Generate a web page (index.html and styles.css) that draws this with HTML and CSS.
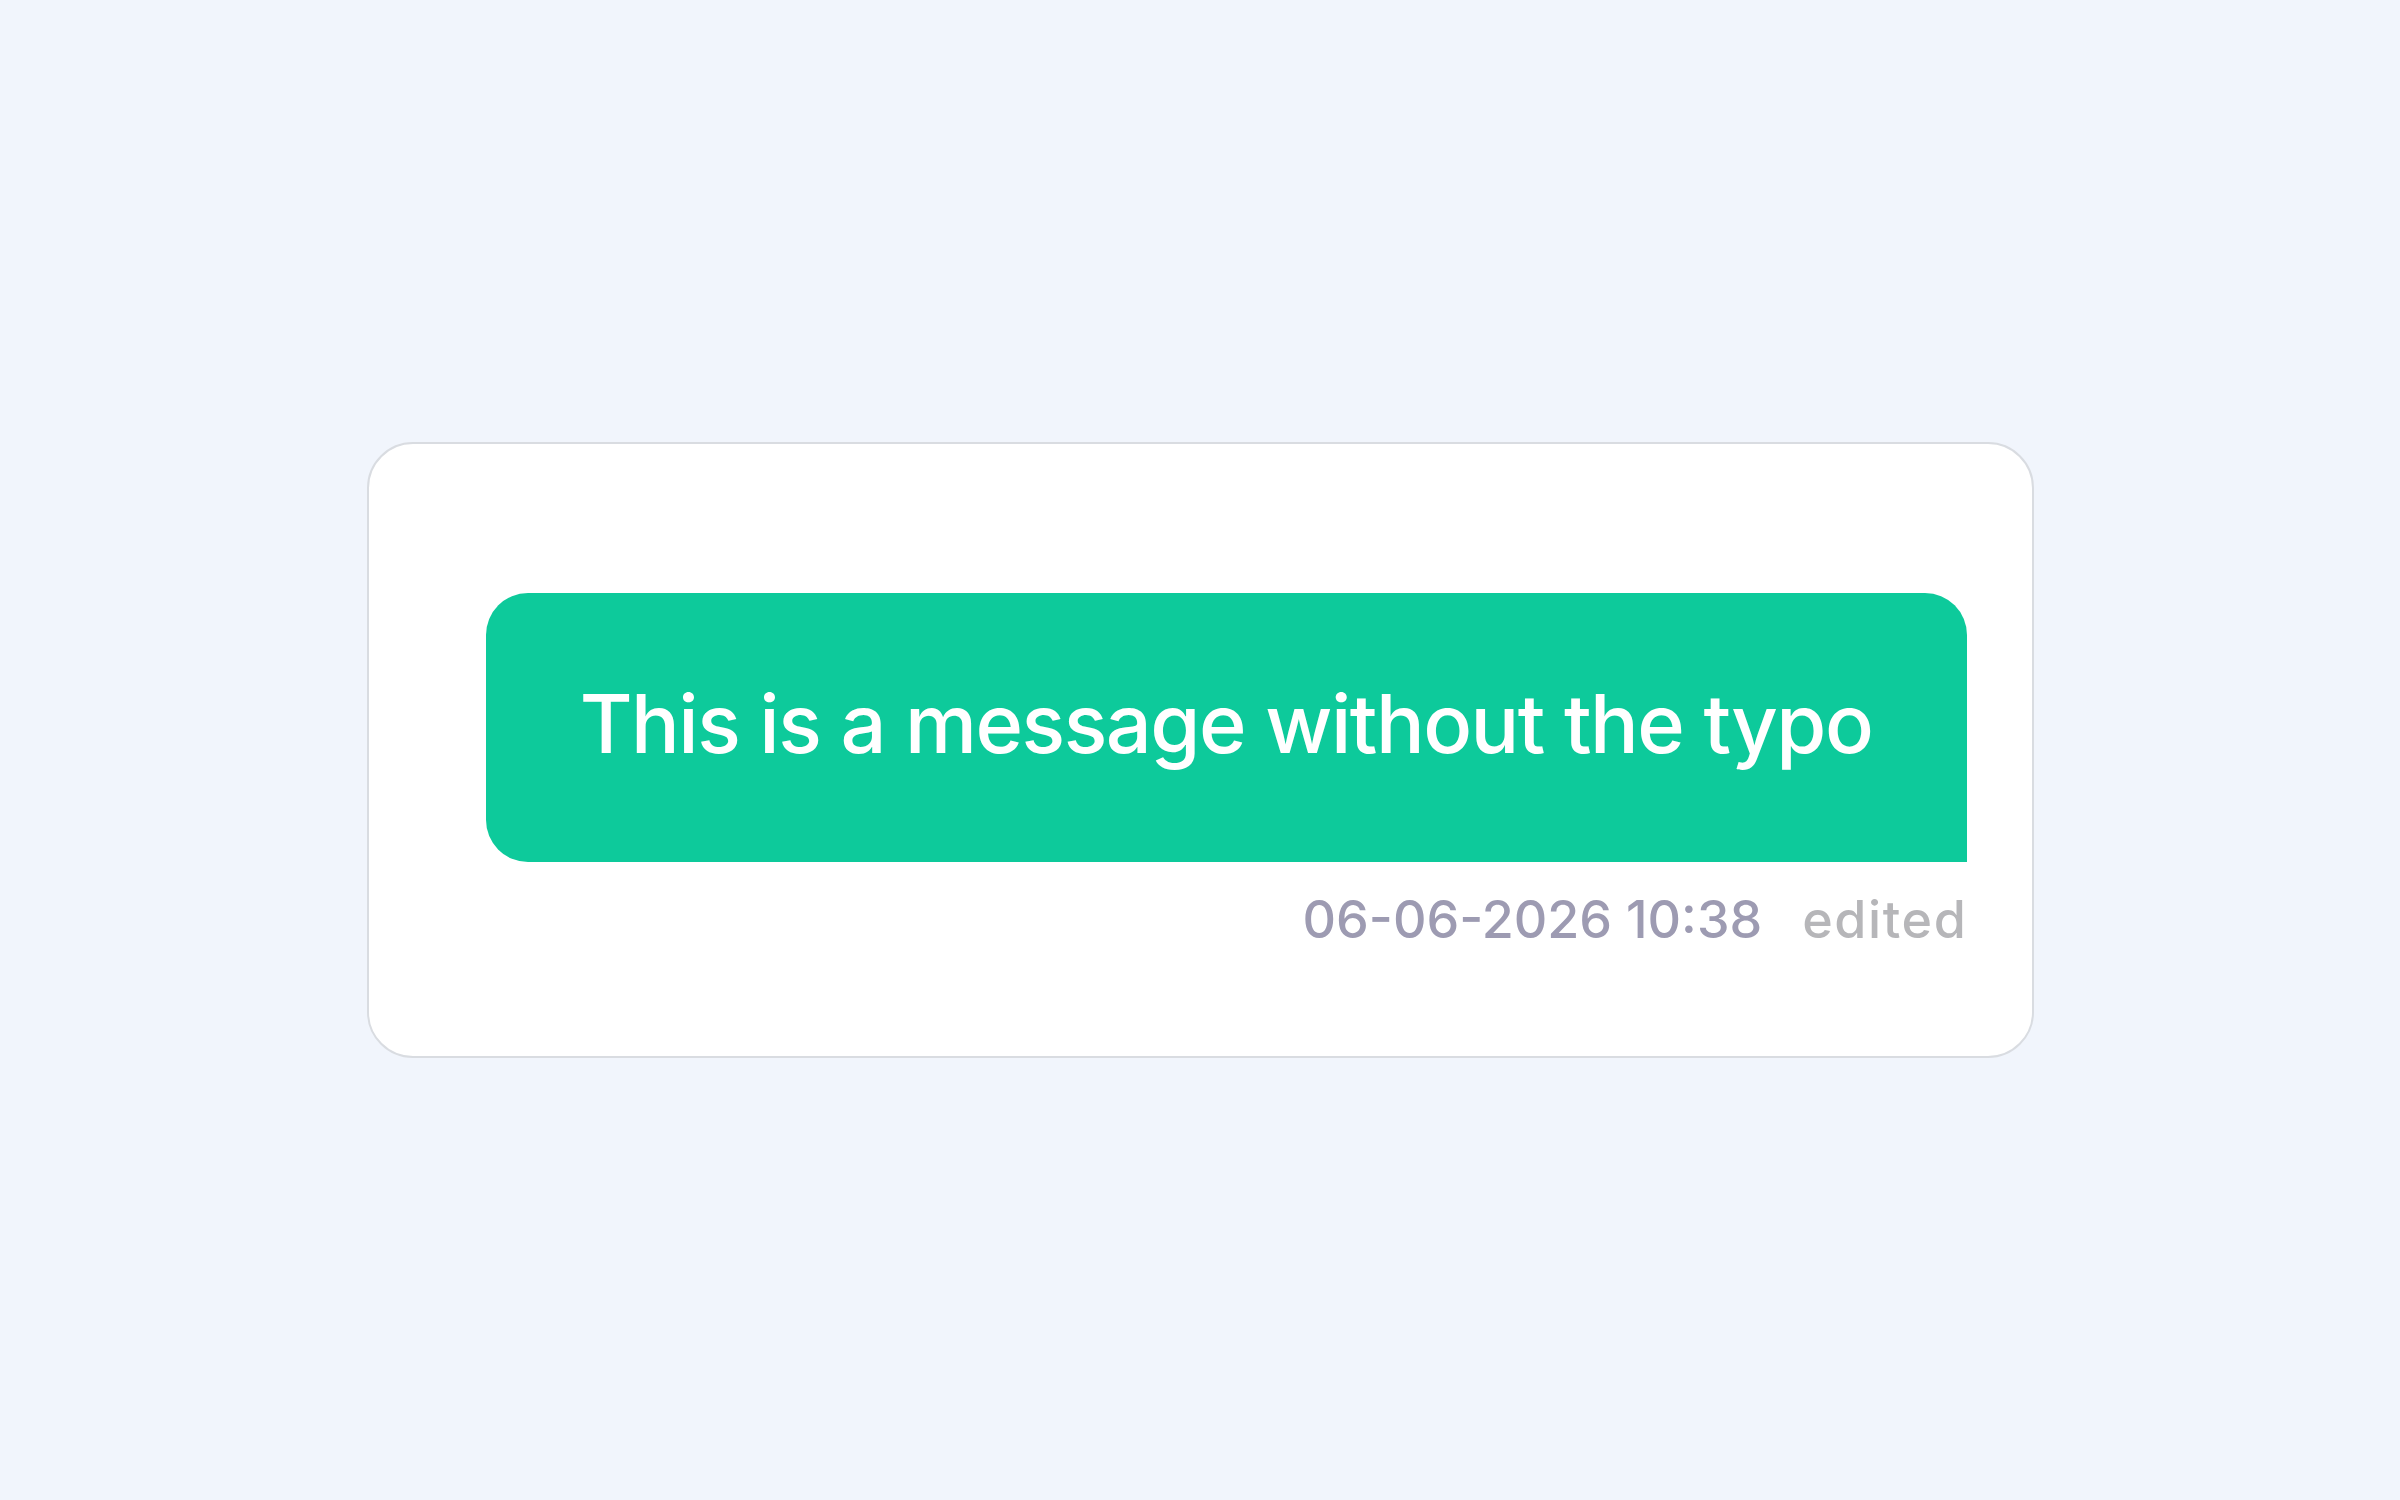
FILE: index.html
```html
<!DOCTYPE html>
<html lang="en">
<head>
<meta charset="utf-8">
<title>Message</title>
<link rel="stylesheet" href="styles.css">
</head>
<body>
<main class="stage">
  <section class="card">
    <div class="message">
      <div class="bubble">This is a message without the typo</div>
      <div class="meta">
        <span class="time">06-06-2026 10:38</span>
        <span class="edited">edited</span>
      </div>
    </div>
  </section>
</main>
</body>
</html>
```
FILE: styles.css
```css
html, body {
  margin: 0;
  padding: 0;
}
body {
  background: #f1f5fc;
  font-family: Inter, "Noto Sans", sans-serif;
}
.stage {
  width: 100%;
  height: 100vh;
  display: flex;
  align-items: center;
  justify-content: center;
}
.card {
  box-sizing: border-box;
  width: 1667px;
  height: 616px;
  background: #ffffff;
  border: 2px solid #d9dce1;
  border-radius: 46px;
  padding: 149px 65px 0 117px;
}
.message {
  display: flex;
  flex-direction: column;
  align-items: flex-end;
}
.bubble {
  box-sizing: border-box;
  width: 100%;
  height: 269px;
  display: flex;
  align-items: center;
  justify-content: center;
  background: #0dca9b;
  color: #ffffff;
  font-size: 81px;
  font-weight: 500;
  letter-spacing: -1.5px;
  white-space: nowrap;
  border-radius: 42px 42px 0 42px;
  padding: 0 40px 8px;
}
.meta {
  display: flex;
  gap: 40px;
  margin-top: 27px;
  font-size: 52px;
  line-height: 1.2;
  font-weight: 500;
}
.time {
  color: #9d9bb2;
}
.edited {
  color: #b6b6b9;
  letter-spacing: 1.6px;
  margin-right: -1px;
}
```
